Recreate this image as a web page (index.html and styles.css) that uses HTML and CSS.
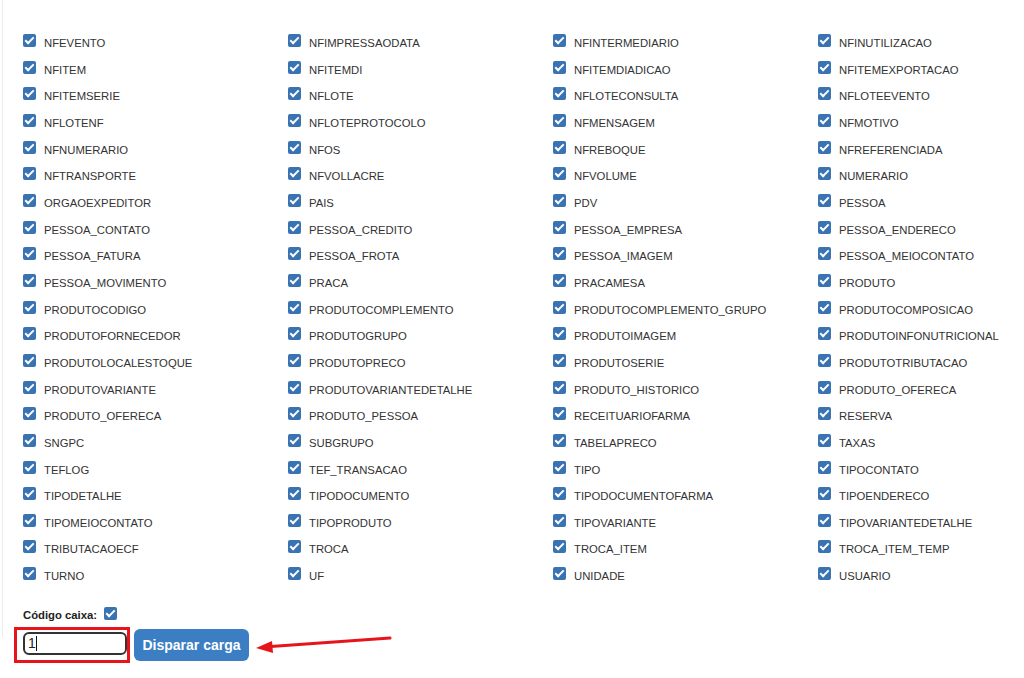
FILE: index.html
```html
<!DOCTYPE html>
<html lang="pt-BR">
<head>
    <meta charset="UTF-8">
    <meta name="viewport" content="width=device-width, initial-scale=1.0">
    <title>Carga de tabelas</title>
    <link rel="stylesheet" href="styles.css">
</head>
<body>

    <div class="page">
        <div class="panel">
            <div class="tables">
                <label class="item"><span class="check"></span>NFEVENTO</label>
                <label class="item"><span class="check"></span>NFIMPRESSAODATA</label>
                <label class="item"><span class="check"></span>NFINTERMEDIARIO</label>
                <label class="item"><span class="check"></span>NFINUTILIZACAO</label>
                <label class="item"><span class="check"></span>NFITEM</label>
                <label class="item"><span class="check"></span>NFITEMDI</label>
                <label class="item"><span class="check"></span>NFITEMDIADICAO</label>
                <label class="item"><span class="check"></span>NFITEMEXPORTACAO</label>
                <label class="item"><span class="check"></span>NFITEMSERIE</label>
                <label class="item"><span class="check"></span>NFLOTE</label>
                <label class="item"><span class="check"></span>NFLOTECONSULTA</label>
                <label class="item"><span class="check"></span>NFLOTEEVENTO</label>
                <label class="item"><span class="check"></span>NFLOTENF</label>
                <label class="item"><span class="check"></span>NFLOTEPROTOCOLO</label>
                <label class="item"><span class="check"></span>NFMENSAGEM</label>
                <label class="item"><span class="check"></span>NFMOTIVO</label>
                <label class="item"><span class="check"></span>NFNUMERARIO</label>
                <label class="item"><span class="check"></span>NFOS</label>
                <label class="item"><span class="check"></span>NFREBOQUE</label>
                <label class="item"><span class="check"></span>NFREFERENCIADA</label>
                <label class="item"><span class="check"></span>NFTRANSPORTE</label>
                <label class="item"><span class="check"></span>NFVOLLACRE</label>
                <label class="item"><span class="check"></span>NFVOLUME</label>
                <label class="item"><span class="check"></span>NUMERARIO</label>
                <label class="item"><span class="check"></span>ORGAOEXPEDITOR</label>
                <label class="item"><span class="check"></span>PAIS</label>
                <label class="item"><span class="check"></span>PDV</label>
                <label class="item"><span class="check"></span>PESSOA</label>
                <label class="item"><span class="check"></span>PESSOA_CONTATO</label>
                <label class="item"><span class="check"></span>PESSOA_CREDITO</label>
                <label class="item"><span class="check"></span>PESSOA_EMPRESA</label>
                <label class="item"><span class="check"></span>PESSOA_ENDERECO</label>
                <label class="item"><span class="check"></span>PESSOA_FATURA</label>
                <label class="item"><span class="check"></span>PESSOA_FROTA</label>
                <label class="item"><span class="check"></span>PESSOA_IMAGEM</label>
                <label class="item"><span class="check"></span>PESSOA_MEIOCONTATO</label>
                <label class="item"><span class="check"></span>PESSOA_MOVIMENTO</label>
                <label class="item"><span class="check"></span>PRACA</label>
                <label class="item"><span class="check"></span>PRACAMESA</label>
                <label class="item"><span class="check"></span>PRODUTO</label>
                <label class="item"><span class="check"></span>PRODUTOCODIGO</label>
                <label class="item"><span class="check"></span>PRODUTOCOMPLEMENTO</label>
                <label class="item"><span class="check"></span>PRODUTOCOMPLEMENTO_GRUPO</label>
                <label class="item"><span class="check"></span>PRODUTOCOMPOSICAO</label>
                <label class="item"><span class="check"></span>PRODUTOFORNECEDOR</label>
                <label class="item"><span class="check"></span>PRODUTOGRUPO</label>
                <label class="item"><span class="check"></span>PRODUTOIMAGEM</label>
                <label class="item"><span class="check"></span>PRODUTOINFONUTRICIONAL</label>
                <label class="item"><span class="check"></span>PRODUTOLOCALESTOQUE</label>
                <label class="item"><span class="check"></span>PRODUTOPRECO</label>
                <label class="item"><span class="check"></span>PRODUTOSERIE</label>
                <label class="item"><span class="check"></span>PRODUTOTRIBUTACAO</label>
                <label class="item"><span class="check"></span>PRODUTOVARIANTE</label>
                <label class="item"><span class="check"></span>PRODUTOVARIANTEDETALHE</label>
                <label class="item"><span class="check"></span>PRODUTO_HISTORICO</label>
                <label class="item"><span class="check"></span>PRODUTO_OFERECA</label>
                <label class="item"><span class="check"></span>PRODUTO_OFERECA</label>
                <label class="item"><span class="check"></span>PRODUTO_PESSOA</label>
                <label class="item"><span class="check"></span>RECEITUARIOFARMA</label>
                <label class="item"><span class="check"></span>RESERVA</label>
                <label class="item"><span class="check"></span>SNGPC</label>
                <label class="item"><span class="check"></span>SUBGRUPO</label>
                <label class="item"><span class="check"></span>TABELAPRECO</label>
                <label class="item"><span class="check"></span>TAXAS</label>
                <label class="item"><span class="check"></span>TEFLOG</label>
                <label class="item"><span class="check"></span>TEF_TRANSACAO</label>
                <label class="item"><span class="check"></span>TIPO</label>
                <label class="item"><span class="check"></span>TIPOCONTATO</label>
                <label class="item"><span class="check"></span>TIPODETALHE</label>
                <label class="item"><span class="check"></span>TIPODOCUMENTO</label>
                <label class="item"><span class="check"></span>TIPODOCUMENTOFARMA</label>
                <label class="item"><span class="check"></span>TIPOENDERECO</label>
                <label class="item"><span class="check"></span>TIPOMEIOCONTATO</label>
                <label class="item"><span class="check"></span>TIPOPRODUTO</label>
                <label class="item"><span class="check"></span>TIPOVARIANTE</label>
                <label class="item"><span class="check"></span>TIPOVARIANTEDETALHE</label>
                <label class="item"><span class="check"></span>TRIBUTACAOECF</label>
                <label class="item"><span class="check"></span>TROCA</label>
                <label class="item"><span class="check"></span>TROCA_ITEM</label>
                <label class="item"><span class="check"></span>TROCA_ITEM_TEMP</label>
                <label class="item"><span class="check"></span>TURNO</label>
                <label class="item"><span class="check"></span>UF</label>
                <label class="item"><span class="check"></span>UNIDADE</label>
                <label class="item"><span class="check"></span>USUARIO</label>
            </div>

            <div class="caixa-label">Código caixa: <span class="check"></span></div>
        </div>

        <form class="carga-form" id="carga-form">
            <div class="highlight">
                <div class="caixa-input">1<span class="caret"></span></div>
            </div>
            <button type="submit">Disparar carga</button>
            <svg class="arrow" width="150" height="30" viewBox="0 0 150 30">
                <line x1="140" y1="10" x2="14" y2="19" stroke="#e8141c" stroke-width="3" stroke-linecap="round"/>
                <polygon points="6,20 22,13 23,25" fill="#e8141c"/>
            </svg>
        </form>
    </div>

</body>
</html>
```

FILE: styles.css
```css
body {
    font-family: "Liberation Sans", Arial, sans-serif;
    background-color: #fff;
    color: #333;
    margin: 0;
}

.page {
    position: relative;
    overflow: hidden;
}

.panel {
    margin-left: 2px;
    border-left: 1px solid #ececec;
    padding: 30px 0 14px 20px;
}

.tables {
    display: grid;
    grid-template-columns: 265px 265px 265px auto;
}

.item {
    display: block;
    font-size: 11.3px;
    line-height: 26.65px;
    white-space: nowrap;
}

.check {
    position: relative;
    display: inline-block;
    width: 13px;
    height: 13px;
    margin-right: 8px;
    border-radius: 2px;
    background-color: #3a73b2;
    vertical-align: baseline;
}

.check::after {
    content: '';
    position: absolute;
    left: 4px;
    top: 1px;
    width: 3px;
    height: 7px;
    border: solid #fff;
    border-width: 0 2px 2px 0;
    transform: rotate(45deg);
}

.caixa-label {
    margin-top: 17px;
    font-size: 11.3px;
    font-weight: bold;
    line-height: 16px;
    color: #222;
}

.caixa-label .check {
    margin-left: 4px;
    vertical-align: -1px;
}

.carga-form {
    display: flex;
    align-items: center;
    margin-top: -10px;
    padding-left: 14px;
    padding-bottom: 16px;
}

.highlight {
    border: 3px solid #e8141c;
    padding: 2px 0 5px 6px;
}

.caixa-input {
    box-sizing: border-box;
    width: 104px;
    height: 23px;
    border: 2px solid #333;
    border-radius: 6px;
    padding: 0 3px;
    font-size: 14px;
    line-height: 19px;
    color: #222;
}

.caret {
    display: inline-block;
    width: 1px;
    height: 15px;
    background-color: #111;
    vertical-align: -3px;
}

button {
    margin-left: 4px;
    width: 115px;
    height: 32px;
    padding: 0;
    background-color: #3b7ec4;
    color: #fff;
    border: none;
    border-radius: 6px;
    font-family: "Liberation Sans", Arial, sans-serif;
    font-size: 14px;
    font-weight: bold;
    cursor: pointer;
}

.arrow {
    position: absolute;
    left: 250px;
    top: 628px;
}
```
